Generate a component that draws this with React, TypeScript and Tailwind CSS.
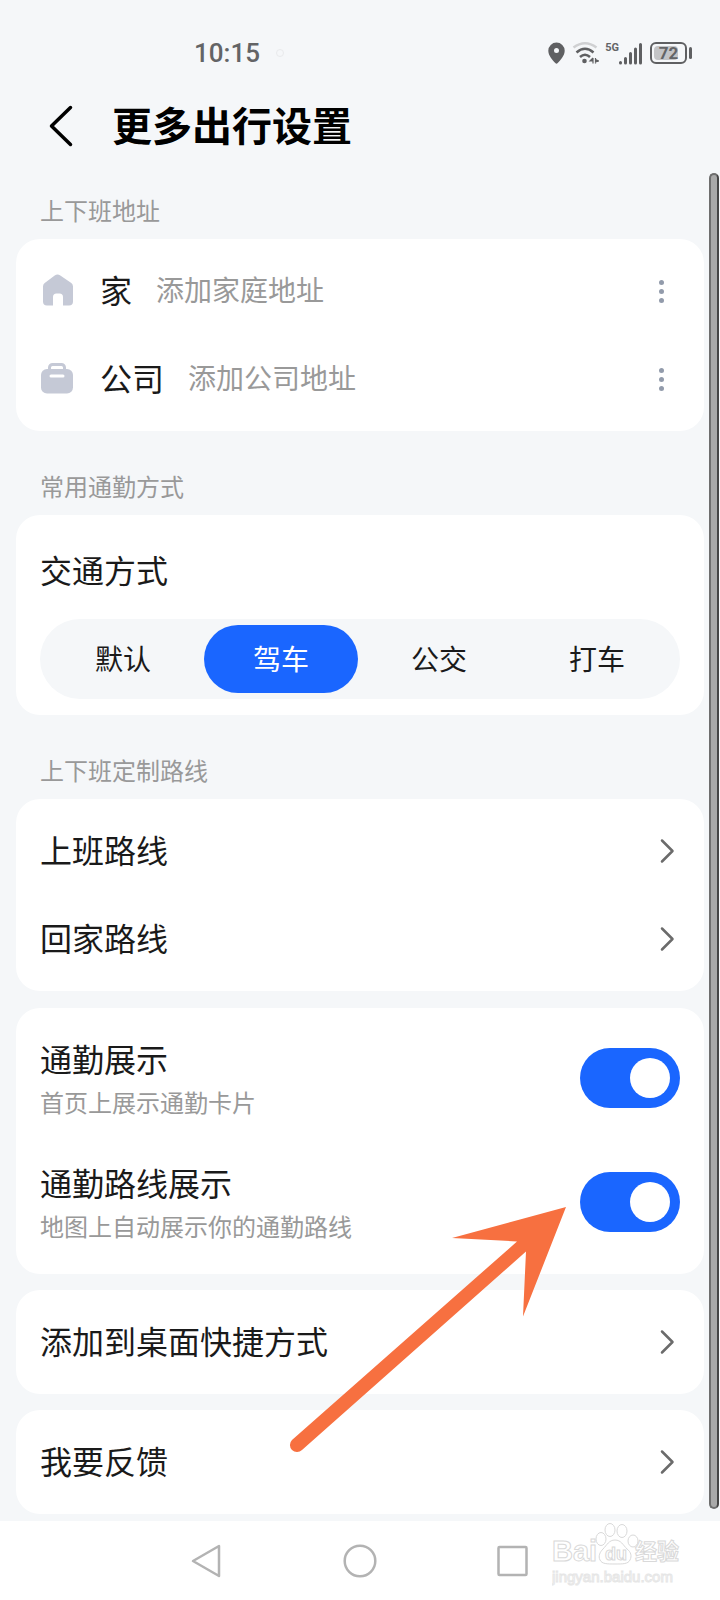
import React, { useState } from 'react';

const modes = ['默认', '驾车', '公交', '打车'];

const addresses = [
  { id: 'home', label: '家', hint: '添加家庭地址' },
  { id: 'company', label: '公司', hint: '添加公司地址' },
];

function HomeIcon() {
  return (
    <svg width="34" height="34" viewBox="0 0 34 34" fill="#c5c9d6">
      <path d="M14.7 1.5a4.500 4.500 0 0 1 5.600 0l11 7.600A4.500 4.500 0 0 1 33 12.700v14.800a4 4 0 0 1-4 4h-6v-8.500a3.500 3.500 0 0 0-3.500-3.500h-3a3.500 3.500 0 0 0-3.500 3.500v8.500H7a4 4 0 0 1-4-4V12.700a4.500 4.500 0 0 1 1.700-3.600z" />
    </svg>
  );
}

function CompanyIcon() {
  return (
    <svg width="34" height="34" viewBox="0 0 34 34">
      <path d="M9.500 8.500V5.500a3 3 0 0 1 3-3h9a3 3 0 0 1 3 3v3" fill="none" stroke="#c5c9d6" strokeWidth="3" />
      <rect x="1" y="7" width="32" height="24.500" rx="6" fill="#c5c9d6" />
      <path d="M11 14h12" stroke="#fff" strokeWidth="3" strokeLinecap="round" />
    </svg>
  );
}

function Chevron() {
  return (
    <svg width="16" height="26" viewBox="0 0 16 26" fill="none" stroke="#6b6b6b" strokeWidth="2.5" strokeLinecap="round" strokeLinejoin="round">
      <path d="M2 2.500L12.500 13 2 23.500" />
    </svg>
  );
}

function StatusBar() {
  return (
    <div className="flex h-20 items-center justify-between pt-[26px] pr-7 pl-[194px] text-[#636466]">
      <div className="flex items-center gap-4">
        <span className="font-['Roboto',sans-serif] text-[26px] leading-8 font-medium">10:15</span>
        <span className="size-2 rounded-full border border-[#e9eaec]" />
      </div>
      <div className="flex items-center">
        <svg width="17" height="22" viewBox="0 0 17 22" fill="#5f6062">
          <path fillRule="evenodd" d="M8.500 0.500a8.200 8.200 0 0 1 8.200 8.200c0 5-4.500 9.500-7 12.300a1.600 1.600 0 0 1-2.400 0C4.800 18.200.3 13.700.3 8.700A8.200 8.200 0 0 1 8.500.5zm0 5.500a2.500 2.500 0 1 0 0 5 2.500 2.500 0 0 0 0-5z" />
        </svg>
        <svg width="27" height="24" viewBox="0 0 27 24" fill="none" strokeWidth="2.500" className="ml-[7px]">
          <path d="M1.500 6.500Q13 -2 24.500 6.500" stroke="#cfd0d2" />
          <path d="M4.500 11.500Q13 4 21.500 11.500" stroke="#5f6062" />
          <path d="M8 16Q13 11.500 18 16" stroke="#5f6062" />
          <circle cx="12.500" cy="20" r="2.300" fill="#5f6062" />
          <path d="M21 17v5.500M21 17l-3 3h3M23.500 17v5.500M23.500 18.500l3 1.500-3 1z" stroke="#5f6062" strokeWidth="1.200" fill="#5f6062" />
        </svg>
        <div className="ml-1.5 flex">
          <span className="font-['Roboto',sans-serif] text-[11px] leading-3 font-bold">5G</span>
          <svg width="24" height="23" viewBox="0 0 24 23" fill="none" stroke="#5f6062" strokeWidth="3" strokeLinecap="round">
            <path d="M1.500 20.500v.5M6.500 16.500V21M11.500 11.500V21M16.500 7V21M21.500 2.500V21" />
          </svg>
        </div>
        <div className="ml-[7px] flex items-center gap-0.5">
          <div className="flex h-[22px] w-[37px] rounded-md border-2 border-[#5f6062] p-0.5">
            <div className="flex h-full w-6 items-center justify-center rounded-sm bg-[#c3c4c6] pl-[5px] font-['Roboto',sans-serif] text-[17px] leading-4 font-bold">
              72
            </div>
          </div>
          <div className="h-3 w-[3px] rounded bg-[#5f6062]" />
        </div>
      </div>
    </div>
  );
}

function SectionTitle({ children }: { children: React.ReactNode }) {
  return <h2 className="mb-3 pb-0.5 pl-6 text-2xl leading-[30px] text-[#999999]">{children}</h2>;
}

function LinkRow({ label, tall }: { label: string; tall?: boolean }) {
  return (
    <a href="#" className={`flex items-center justify-between pr-7 pl-6 ${tall ? 'h-[104px]' : 'h-22'}`}>
      <span className="pb-1 text-[32px] leading-10">{label}</span>
      <Chevron />
    </a>
  );
}

function ToggleRow({ id, label, hint }: { id: string; label: string; hint: string }) {
  const [on, setOn] = useState(true);

  return (
    <label htmlFor={id} className="flex h-[124px] items-center justify-between px-6">
      <span className="flex flex-col gap-1 pt-1">
        <span className="text-[32px] leading-10">{label}</span>
        <span className="text-2xl leading-10 text-[#999999]">{hint}</span>
      </span>
      <span className="relative h-[60px] w-[100px] shrink-0">
        <input
          id={id}
          type="checkbox"
          role="switch"
          checked={on}
          onChange={(e) => setOn(e.target.checked)}
          className="peer size-full appearance-none rounded-full bg-[#d5d8de] checked:bg-[#1a66ff]"
        />
        <span className="pointer-events-none absolute top-2.5 left-2.5 size-10 rounded-full bg-white peer-checked:left-[50px]" />
      </span>
    </label>
  );
}

function Watermark() {
  return (
    <svg width="132" height="66" viewBox="0 0 132 66" fill="#fff" stroke="#d9d9d9" strokeWidth="1" className="absolute right-9 bottom-3.5">
      <ellipse cx="49" cy="19" rx="5" ry="6.500" />
      <ellipse cx="58" cy="10" rx="5" ry="6.500" />
      <ellipse cx="70" cy="11" rx="5" ry="6.500" />
      <ellipse cx="81" cy="21" rx="5" ry="6" />
      <text x="0" y="41" fontSize="29" fontWeight="700" fontFamily="Liberation Sans, sans-serif">Bai</text>
      <path d="M63 20c6 0 8 5 12 9 4 3 5 7 3 11-2 4-7 4-15 4s-13 0-15-4c-2-4 0-8 3-11 4-4 6-9 12-9z" />
      <text x="53" y="40" fontSize="18" fontWeight="700" fontFamily="Liberation Sans, sans-serif">du</text>
      <text x="83" y="39" fontSize="22" fontWeight="700" fontFamily="Noto Sans CJK SC, sans-serif">经验</text>
      <text x="0" y="62" fontSize="15" stroke="#e6e6e6" fontFamily="Liberation Sans, sans-serif">jingyan.baidu.com</text>
    </svg>
  );
}

function NavBar() {
  return (
    <nav className="relative flex h-[79px] items-center justify-center gap-[118px] bg-white">
      <button aria-label="返回">
        <svg width="34" height="36" viewBox="0 0 34 36" fill="none" stroke="#b3b3b3" strokeWidth="2.500" strokeLinejoin="round">
          <path d="M29 3v30L3 18z" />
        </svg>
      </button>
      <button aria-label="主页">
        <svg width="36" height="36" viewBox="0 0 36 36" fill="none" stroke="#b3b3b3" strokeWidth="2.500">
          <circle cx="18" cy="18" r="15.300" />
        </svg>
      </button>
      <button aria-label="最近任务">
        <svg width="34" height="36" viewBox="0 0 34 36" fill="none" stroke="#b3b3b3" strokeWidth="2.500">
          <rect x="2.500" y="4" width="28" height="28" rx="1" />
        </svg>
      </button>
      <Watermark />
    </nav>
  );
}

function App() {
  const [mode, setMode] = useState('驾车');

  return (
    <div className="relative min-h-screen bg-[#f5f7f9] font-['Noto_Sans_CJK_SC',sans-serif] text-[#1a1a1a]">
      <StatusBar />

      <header className="flex h-[92px] items-center gap-9 pl-12">
        <button aria-label="返回">
          <svg width="28" height="42" viewBox="0 0 28 42" fill="none" stroke="#000" strokeWidth="3.500" strokeLinecap="round" strokeLinejoin="round">
            <path d="M22.500 2.500L3.500 21l19 18.500" />
          </svg>
        </button>
        <h1 className="pb-1 text-[40px] leading-[48px] font-bold text-black">更多出行设置</h1>
      </header>

      <main className="px-4 pt-[23px] pb-[7px]">
        <SectionTitle>上下班地址</SectionTitle>
        <section className="rounded-3xl bg-white py-2">
          {addresses.map((item) => (
            <div key={item.id} className="flex h-22 items-center pr-7 pl-6">
              {item.id === 'home' ? <HomeIcon /> : <CompanyIcon />}
              <span className="ml-[26px] pb-1 text-[32px] leading-10">{item.label}</span>
              <span className="ml-6 flex-1 pb-1 text-[28px] leading-10 text-[#999999]">{item.hint}</span>
              <button aria-label={`${item.label}更多操作`} className="flex w-[29px] flex-col items-center gap-1">
                <span className="size-[5px] rounded-full bg-[#929bab]" />
                <span className="size-[5px] rounded-full bg-[#929bab]" />
                <span className="size-[5px] rounded-full bg-[#929bab]" />
              </button>
            </div>
          ))}
        </section>

        <div className="mt-10">
          <SectionTitle>常用通勤方式</SectionTitle>
          <section className="rounded-3xl bg-white px-6 pt-[34px] pb-4">
            <h3 className="text-[32px] leading-10">交通方式</h3>
            <div className="mt-[30px] grid h-20 grid-cols-4 gap-1 rounded-full bg-[#f5f7f9] p-1.5">
              {modes.map((m) => (
                <button
                  key={m}
                  aria-pressed={mode === m}
                  onClick={() => setMode(m)}
                  className={`rounded-full pb-0.5 text-[28px] leading-10 ${mode === m ? 'bg-[#1a66ff] text-white' : ''}`}
                >
                  {m}
                </button>
              ))}
            </div>
          </section>
        </div>

        <div className="mt-10">
          <SectionTitle>上下班定制路线</SectionTitle>
          <section className="rounded-3xl bg-white py-2">
            <LinkRow label="上班路线" />
            <LinkRow label="回家路线" />
          </section>
        </div>

        <div className="mt-[17px] flex flex-col gap-4">
          {/* Commute switches */}
          <section className="rounded-3xl bg-white pt-2 pb-2.5">
            <ToggleRow id="show-card" label="通勤展示" hint="首页上展示通勤卡片" />
            <ToggleRow id="show-route" label="通勤路线展示" hint="地图上自动展示你的通勤路线" />
          </section>
          <section className="rounded-3xl bg-white">
            <LinkRow label="添加到桌面快捷方式" tall />
          </section>
          <section className="rounded-3xl bg-white">
            <LinkRow label="我要反馈" tall />
          </section>
        </div>
      </main>

      <NavBar />

      {/* Scrollbar thumb */}
      <div className="absolute top-[173px] right-px bottom-[91px] w-2.5 rounded-full border-2 border-[#6e6e6e] border-r-[#454545] bg-[#a9a9a9]" />

      {/* Pointer to the route switch */}
      <svg width="280" height="250" viewBox="0 0 280 250" fill="#f77040" className="pointer-events-none absolute top-[1204px] left-[287px]">
        <path d="M279 3L165 34l65 3.500L5 236a7 7 0 0 0 10 10L239 47.500l-3 65z" />
      </svg>
    </div>
  );
}

export default App;
